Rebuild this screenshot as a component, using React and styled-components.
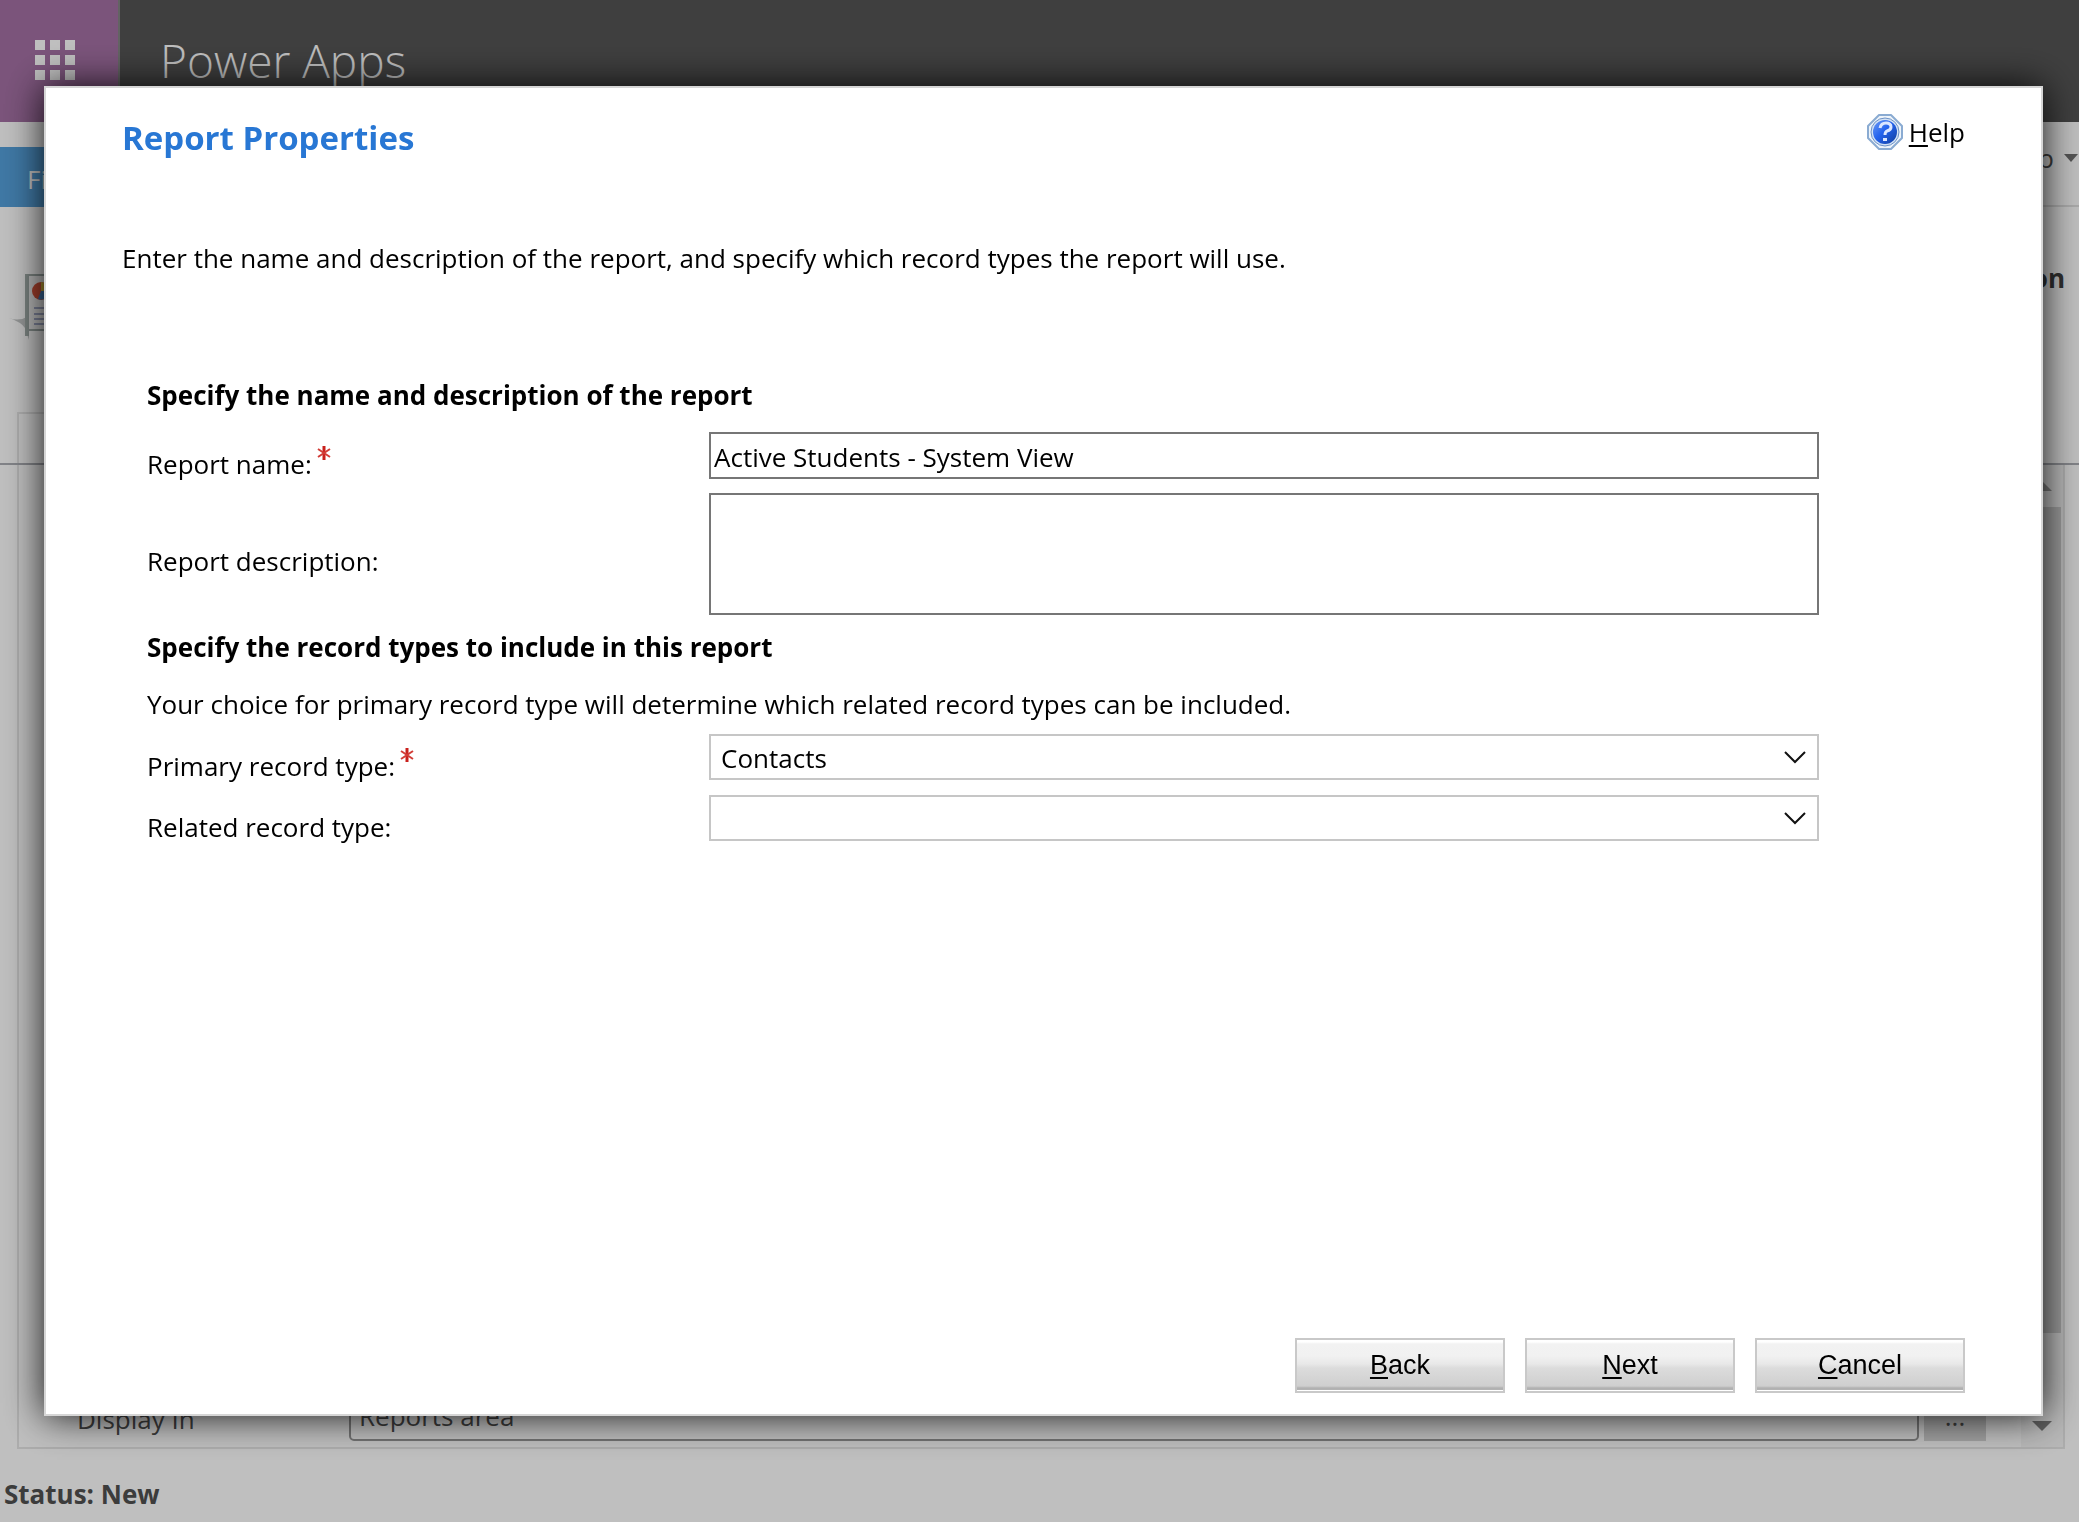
import React from 'react';
import styled, { createGlobalStyle } from 'styled-components';

const GlobalStyle = createGlobalStyle`
  * {
    box-sizing: border-box;
  }
  body {
    margin: 0;
    background: #fff;
    color: #000;
    font-family: 'Open Sans', 'Noto Sans', sans-serif;
    font-size: 26px;
    line-height: 36px;
  }
  input, select, textarea {
    font: inherit;
    color: inherit;
  }
`

/* page behind the dialog */

const Page = styled.div`
  display: flex;
  flex-direction: column;
  min-height: 100vh;
  color: #505050;
`
const TopBar = styled.header`
  display: flex;
  align-items: stretch;
  height: 122px;
  background: #555;
`
const Waffle = styled.button`
  display: flex;
  align-items: center;
  justify-content: center;
  width: 120px;
  padding: 0 8px 2px 0;
  border: 0;
  border-right: 2px solid #858585;
  background: #a571a5;
`
const Brand = styled.div`
  padding: 26px 40px;
  color: #fff;
  font-size: 46px;
  font-weight: 300;
  line-height: 68px;
`
const Ribbon = styled.nav`
  display: flex;
  justify-content: space-between;
  height: 85px;
  border-bottom: 2px solid #e2e2e2;
`
const FileTab = styled.button`
  width: 120px;
  height: 60px;
  margin-top: 25px;
  padding: 4px 0 0 27px;
  border: 0;
  background: #55a1dc;
  color: #fff;
  font: inherit;
  text-align: left;
`
const RibbonHelp = styled.button`
  display: flex;
  align-items: center;
  gap: 10px;
  padding: 0 1px 12px 0;
  border: 0;
  background: none;
  color: inherit;
  font: inherit;
`
const RecordHeader = styled.div`
  display: flex;
  align-items: flex-start;
  justify-content: space-between;
  height: 205px;
  padding: 53px 14px 0 7px;
`
const RecordTitle = styled.strong`
  color: #404040;
`
const TabStrip = styled.div`
  height: 53px;
  padding-left: 17px;
  border-bottom: 2px solid #adafb5;
`
const Tab = styled.div`
  width: 300px;
  height: 51px;
  border: solid #e6e6e6;
  border-width: 2px 0 0 2px;
`
const Panel = styled.div`
  display: flex;
  flex: 1;
  margin: 0 14px 0 17px;
  border: 2px solid #e6e6e6;
  border-top: 0;
`
const PanelBody = styled.div`
  display: flex;
  flex: 1;
  flex-direction: column;
  justify-content: flex-end;
  padding: 0 35px 6px 58px;
`
const PanelRow = styled.div`
  display: flex;
  align-items: flex-end;
`
const PanelLabel = styled.label`
  width: 272px;
  padding-bottom: 4px;
`
const PanelInput = styled.input`
  flex: 1;
  height: 50px;
  padding: 0 8px;
  border: 2px solid #999;
  border-radius: 5px;
  background: #fff;
`
const LookupButton = styled.button`
  width: 62px;
  height: 50px;
  margin-left: 5px;
  padding: 0;
  border: 0;
  background: #d6d6d6;
  color: inherit;
  font: inherit;
`
const Scrollbar = styled.div`
  display: flex;
  flex-direction: column;
  width: 42px;
  background: #f6f6f6;
`
const ScrollArrow = styled.div`
  display: flex;
  align-items: center;
  justify-content: center;
  height: 42px;
`
const ScrollTrack = styled.div`
  flex: 1;
  padding-right: 2px;
`
const ScrollThumb = styled.div`
  height: 92%;
  background: #cfcfcf;
`
const StatusBar = styled.footer`
  padding: 27px 4px 10px;
  font-weight: bold;
`

/* dialog */

const Backdrop = styled.div`
  position: fixed;
  inset: 0;
  display: flex;
  padding: 86px 36px 106px 44px;
  background: rgba(0, 0, 0, 0.25);
`
const Dialog = styled.section`
  display: flex;
  flex: 1;
  flex-direction: column;
  padding: 26px 76px 21px;
  border: 2px solid #d6d6d6;
  background: #fff;
  box-shadow: 0 0 36px rgba(0, 0, 0, 0.9);
`
const DialogHeader = styled.div`
  display: flex;
  align-items: flex-start;
  justify-content: space-between;
`
const Title = styled.h1`
  margin: 0;
  color: #2877d4;
  font-size: 33px;
  line-height: 48px;
`
const HelpLink = styled.a`
  display: flex;
  align-items: center;
  gap: 6px;
  color: #000;
  text-decoration: none;
`
const Intro = styled.p`
  margin: 78px 0 101px;
`
const Form = styled.form`
  padding: 0 146px 0 25px;
`
const SectionTitle = styled.h2`
  margin: 0;
  font-size: 26px;
  line-height: 36px;
`
const Hint = styled.p`
  margin: 21px 0 0;
`
const Fields = styled.div`
  display: grid;
  grid-template-columns: 562px 1fr;
  row-gap: 11px;
  margin: ${props => props.$last ? '12px 0 0' : '19px 0 14px'};
`
const Label = styled.label`
  align-self: center;
  padding-top: 14px;
`
const Required = styled.svg`
  margin-left: 5px;
  vertical-align: 14px;
`
const TextInput = styled.input`
  width: 100%;
  height: 47px;
  padding: 2px 3px 0;
  border: 2px solid #767676;
  border-radius: 0;
`
const TextArea = styled.textarea`
  display: block;
  width: 100%;
  height: 122px;
  padding: 3px;
  border: 2px solid #767676;
  border-radius: 0;
  resize: none;
`
const SelectBox = styled.div`
  position: relative;
  height: 46px;
`
const Select = styled.select`
  width: 100%;
  height: 100%;
  padding: 2px 40px 0 10px;
  border: 2px solid #c6c6c6;
  border-radius: 0;
  background: #fff;
  appearance: none;
`
const Chevron = styled.svg`
  position: absolute;
  top: 16px;
  right: 13px;
  pointer-events: none;
`
const Actions = styled.div`
  display: flex;
  justify-content: flex-end;
  gap: 20px;
  margin-top: auto;
`
const ActionButton = styled.button`
  width: 210px;
  height: 55px;
  padding: 0;
  border: 2px solid #c9c9c9;
  background: linear-gradient(
    #fff 0,
    #fff 2px,
    #f2f2f2 4px,
    #f1f1f1 16px,
    #e8e8e8 24px,
    #dcdcdc 28px,
    #cfcfcf 46px,
    #b0b0b0 48px,
    #b4b4b4 50px,
    #fff 50px
  );
  color: #000;
  font-family: 'Liberation Sans', Arial, sans-serif;
  font-size: 27px;
`

const Key = styled.u`
  text-underline-offset: 3px;
  text-decoration-thickness: 2px;
`

function WaffleIcon() {
  const steps = [0, 15, 30];
  return (
    <svg width="40" height="40" fill="#fff">
      {steps.map(y => steps.map(x => (
        <rect key={`${x}-${y}`} x={x} y={y} width="10" height="10" />
      )))}
    </svg>
  );
}

function ReportIcon() {
  return (
    <svg width="80" height="80" viewBox="0 0 80 80">
      <path d="M2 58 Q14 62 18 68 L22 80 V56 Q12 62 2 58 Z" fill="#c4c7c7" />
      <rect x="20" y="15" width="56" height="55" fill="#f4f4f4" stroke="#a3aeab" strokeWidth="2" />
      <path d="M20 14 V76" stroke="#a3aeab" strokeWidth="4" />
      <circle cx="34" cy="31" r="9" fill="#d9543a" />
      <path d="M34 31 V22 A9 9 0 0 1 43 31 Z" fill="#d8b63c" />
      <path d="M34 31 H43 A9 9 0 0 1 31 39 Z" fill="#4a80bd" />
      <path d="M27 48 H66 M27 54 H66 M27 59 H66 M27 64 H66" stroke="#a4abc9" strokeWidth="2" />
    </svg>
  );
}

function HelpIcon() {
  return (
    <svg width="36" height="36" viewBox="0 0 36 36">
      <defs>
        <linearGradient id="helpBlue" x1="0" y1="0" x2="1" y2="1">
          <stop offset="0" stopColor="#6d9cf5" />
          <stop offset="0.45" stopColor="#2463ee" />
          <stop offset="1" stopColor="#123f9c" />
        </linearGradient>
      </defs>
      <path d="M12 1 H24 L35 12 V24 L24 35 H12 L1 24 V12 Z" fill="#eef4fa" stroke="#8aabd2" strokeWidth="2" strokeLinejoin="round" />
      <circle cx="18" cy="18" r="14" fill="#d3e2f5" stroke="#6d92c6" strokeWidth="1" />
      <circle cx="18" cy="18" r="12" fill="url(#helpBlue)" />
      <path d="M13 14 Q14 9 19 9 Q24 9 24 13 Q24 16 20 17 Q18 18 18 21" fill="none" stroke="#dbe6ff" strokeWidth="3" />
      <rect x="16" y="24" width="4" height="3" fill="#dbe6ff" />
    </svg>
  );
}

function Asterisk() {
  return (
    <Required width="14" height="14" viewBox="0 0 14 14" aria-label="required">
      <path d="M7 0 V14" stroke="#c9201c" strokeWidth="3" />
      <path d="M1 3 L13 11 M13 3 L1 11" stroke="#d23c36" strokeWidth="2" />
    </Required>
  );
}

function Dropdown({ id, options }) {
  return (
    <SelectBox>
      <Select id={id}>
        {options.map(option => <option key={option}>{option}</option>)}
      </Select>
      <Chevron width="22" height="14" viewBox="0 0 22 14">
        <path d="M1 2 L11 12 L21 2" fill="none" stroke="#111" strokeWidth="2" />
      </Chevron>
    </SelectBox>
  );
}

function ReportPage() {
  return (
    <Page>
      <TopBar>
        <Waffle aria-label="App launcher"><WaffleIcon /></Waffle>
        <Brand>Power Apps</Brand>
      </TopBar>
      <Ribbon>
        <FileTab>File</FileTab>
        <RibbonHelp>
          Help
          <svg width="14" height="8"><path d="M0 0 H14 L7 8 Z" fill="#707070" /></svg>
        </RibbonHelp>
      </Ribbon>
      <RecordHeader>
        <ReportIcon />
        <RecordTitle>Information</RecordTitle>
      </RecordHeader>
      <TabStrip><Tab /></TabStrip>
      <Panel>
        <PanelBody>
          <PanelRow>
            <PanelLabel htmlFor="display-in">Display In</PanelLabel>
            <PanelInput id="display-in" defaultValue="Reports area" />
            <LookupButton>...</LookupButton>
          </PanelRow>
        </PanelBody>
        <Scrollbar>
          <ScrollArrow>
            <svg width="20" height="10"><path d="M0 10 H20 L10 0 Z" fill="#a0a0a0" /></svg>
          </ScrollArrow>
          <ScrollTrack><ScrollThumb /></ScrollTrack>
          <ScrollArrow>
            <svg width="20" height="10"><path d="M0 0 H20 L10 10 Z" fill="#808080" /></svg>
          </ScrollArrow>
        </Scrollbar>
      </Panel>
      <StatusBar>Status: New</StatusBar>
    </Page>
  );
}

export default function App() {
  return (
    <>
      <GlobalStyle />
      <ReportPage />
      <Backdrop>
        <Dialog role="dialog" aria-labelledby="dialog-title">
          <DialogHeader>
            <Title id="dialog-title">Report Properties</Title>
            <HelpLink href="#help">
              <HelpIcon />
              <span><Key>H</Key>elp</span>
            </HelpLink>
          </DialogHeader>
          <Intro>
            Enter the name and description of the report, and specify which record types the report will use.
          </Intro>
          <Form>
            <SectionTitle>Specify the name and description of the report</SectionTitle>
            <Fields>
              <Label htmlFor="report-name">Report name:<Asterisk /></Label>
              <TextInput id="report-name" defaultValue="Active Students - System View" />
              <Label htmlFor="report-description">Report description:</Label>
              <TextArea id="report-description" />
            </Fields>
            <SectionTitle>Specify the record types to include in this report</SectionTitle>
            <Hint>Your choice for primary record type will determine which related record types can be included.</Hint>
            <Fields $last>
              <Label htmlFor="primary-type">Primary record type:<Asterisk /></Label>
              <Dropdown id="primary-type" options={['Contacts']} />
              <Label htmlFor="related-type">Related record type:</Label>
              <Dropdown id="related-type" options={['']} />
            </Fields>
          </Form>
          <Actions>
            <ActionButton><Key>B</Key>ack</ActionButton>
            <ActionButton><Key>N</Key>ext</ActionButton>
            <ActionButton><Key>C</Key>ancel</ActionButton>
          </Actions>
        </Dialog>
      </Backdrop>
    </>
  );
}
